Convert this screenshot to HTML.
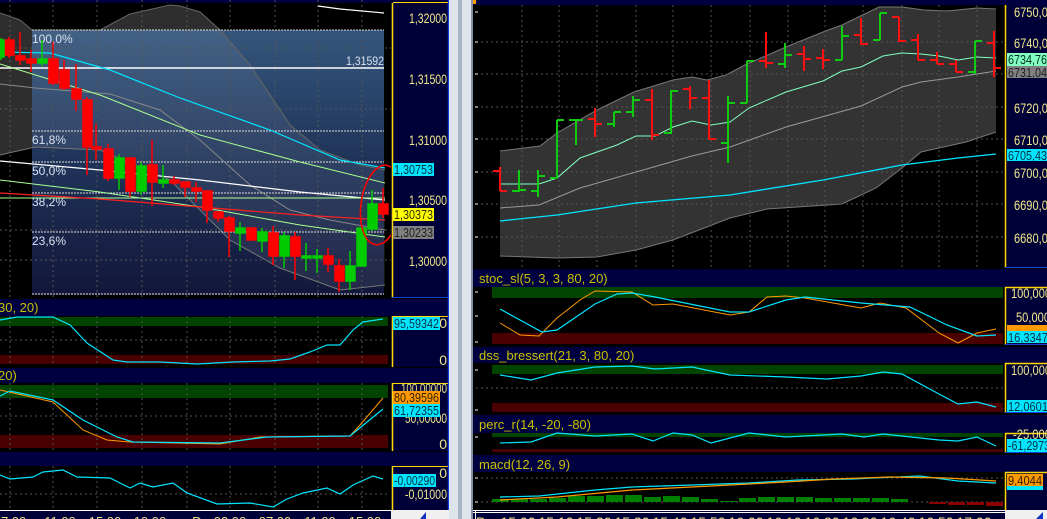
<!DOCTYPE html>
<html><head><meta charset="utf-8"><style>
html,body{margin:0;padding:0;background:#000;}
svg{display:block;font-family:"Liberation Sans",sans-serif;}
</style></head><body>
<svg width="1047" height="519" viewBox="0 0 1047 519" xmlns="http://www.w3.org/2000/svg">
<defs>
<linearGradient id="fib" x1="0" y1="0" x2="0" y2="1">
<stop offset="0" stop-color="#35567c"/><stop offset="0.5" stop-color="#1f3358"/><stop offset="1" stop-color="#12173a"/>
</linearGradient>
</defs>
<rect width="1047" height="519" fill="#000"/>
<rect x="0" y="0" width="449" height="3" fill="#000040"/>
<polygon points="0,13 20,20 32,30 32,147 0,155" fill="#2e2e2e"/>
<polygon points="100,30 130,14 170,5 180,6 200,12 220,30 32,30" fill="#2e2e2e"/>
<rect x="32" y="30" width="352" height="265" fill="url(#fib)"/>
<polygon points="32,30 220,30 250,65 290,125 320,150 360,165 385,170 385,285 340,290 280,268 230,240 170,180 100,150 32,147" fill="#fff" fill-opacity="0.07"/>
<polyline points="0,13 20,20 32,30 100,30 130,14 170,5 180,6 200,12 220,30 250,65 290,125 320,150 360,165 385,170" fill="none" stroke="#666" stroke-width="1"/>
<polyline points="0,155 35,147 100,150 170,180 230,240 280,268 340,290 385,285" fill="none" stroke="#777" stroke-width="1"/>
<g stroke="#555" stroke-dasharray="2,3" stroke-width="1">
<line x1="10" y1="0" x2="10" y2="297"/><line x1="53" y1="0" x2="53" y2="297"/><line x1="97" y1="0" x2="97" y2="297"/><line x1="142" y1="0" x2="142" y2="297"/><line x1="187" y1="0" x2="187" y2="297"/><line x1="230" y1="0" x2="230" y2="297"/><line x1="275" y1="0" x2="275" y2="297"/><line x1="318" y1="0" x2="318" y2="297"/><line x1="362" y1="0" x2="362" y2="297"/>
<line x1="0" y1="48" x2="391" y2="48"/><line x1="0" y1="109" x2="391" y2="109"/><line x1="0" y1="230" x2="391" y2="230"/><line x1="0" y1="260" x2="391" y2="260"/>
</g>
<g stroke="#ddd" stroke-dasharray="2,1" stroke-width="1">
<line x1="32" y1="30" x2="384" y2="30"/><line x1="32" y1="131" x2="384" y2="131"/><line x1="32" y1="162" x2="384" y2="162"/><line x1="32" y1="193" x2="384" y2="193"/><line x1="32" y1="232" x2="384" y2="232"/><line x1="32" y1="294" x2="384" y2="294"/>
</g>
<g fill="#d8e0f0" font-size="12">
<text x="32" y="43">100,0%</text><text x="32" y="144">61,8%</text><text x="32" y="175">50,0%</text><text x="32" y="206">38,2%</text><text x="32" y="245">23,6%</text>
<text x="346" y="65" textLength="38" lengthAdjust="spacingAndGlyphs">1,31592</text>
</g>
<polyline points="0,84 35,88 110,94 160,110 200,140 250,185 290,210 330,220 385,230" fill="none" stroke="#888" stroke-width="1"/>
<line x1="0" y1="68" x2="384" y2="68" stroke="#fff" stroke-width="1.5"/>
<polyline points="318,6 340,9 384,13" fill="none" stroke="#fff" stroke-width="1.2"/>
<polyline points="0,161 100,170 200,180 300,192 385,200" fill="none" stroke="#fff" stroke-width="1.2"/>
<polyline points="0,52 50,53 110,70 180,98 270,130 340,160 385,168" fill="none" stroke="#00e5ff" stroke-width="1.2"/>
<polyline points="0,64 100,95 200,135 300,162 385,183" fill="none" stroke="#a8ff90" stroke-width="1"/>
<polyline points="0,180 100,192 200,207 300,225 385,237" fill="none" stroke="#a8ff90" stroke-width="1"/>
<line x1="0" y1="198" x2="385" y2="198" stroke="#a8ff90" stroke-width="1"/>
<polyline points="0,193 100,199 200,207 300,215 385,220" fill="none" stroke="#ff2020" stroke-width="1.2"/>
<g stroke-width="1.5">
<g stroke="#ff0000" fill="#ff0000">
<line x1="9" y1="37" x2="9" y2="58"/><rect x="5" y="40" width="9" height="15"/>
<line x1="20" y1="32" x2="20" y2="65"/><rect x="16" y="56" width="9" height="4"/>
<line x1="31" y1="50" x2="31" y2="72"/><rect x="27" y="59" width="9" height="4"/>
<line x1="53" y1="42" x2="53" y2="85"/><rect x="49" y="59" width="9" height="24"/>
<line x1="64" y1="60" x2="64" y2="90"/><rect x="60" y="70" width="9" height="18"/>
<line x1="76" y1="64" x2="76" y2="111"/><rect x="72" y="89" width="9" height="10"/>
<line x1="87" y1="97" x2="87" y2="175"/><rect x="83" y="100" width="9" height="47"/>
<line x1="96" y1="124" x2="96" y2="160"/><rect x="92" y="147" width="9" height="2"/>
<line x1="108" y1="144" x2="108" y2="181"/><rect x="104" y="149" width="9" height="29"/>
<line x1="130" y1="158" x2="130" y2="197"/><rect x="126" y="158" width="9" height="33"/>
<line x1="152" y1="140" x2="152" y2="206"/><rect x="148" y="165" width="9" height="17"/>
<line x1="174" y1="176" x2="174" y2="185"/><rect x="170" y="180" width="9" height="3"/>
<line x1="185" y1="182" x2="185" y2="197"/><rect x="181" y="182" width="9" height="5"/>
<line x1="196" y1="182" x2="196" y2="202"/><rect x="192" y="188" width="9" height="3"/>
<line x1="207" y1="190" x2="207" y2="223"/><rect x="203" y="191" width="9" height="19"/>
<line x1="218" y1="212" x2="218" y2="222"/><rect x="214" y="212" width="9" height="6"/>
<line x1="229" y1="216" x2="229" y2="257"/><rect x="225" y="218" width="9" height="13"/>
<line x1="251" y1="228" x2="251" y2="240"/><rect x="247" y="228" width="9" height="12"/>
<line x1="273" y1="226" x2="273" y2="265"/><rect x="269" y="233" width="9" height="23"/>
<line x1="295" y1="232" x2="295" y2="280"/><rect x="291" y="237" width="9" height="19"/>
<line x1="328" y1="248" x2="328" y2="272"/><rect x="324" y="256" width="9" height="8"/>
<line x1="339" y1="259" x2="339" y2="292"/><rect x="335" y="266" width="9" height="15"/>
<line x1="383" y1="188" x2="383" y2="218"/><rect x="379" y="204" width="9" height="10"/>
</g>
<g stroke="#00cc00" fill="#00cc00">
<line x1="1" y1="38" x2="1" y2="60"/><rect x="-3" y="40" width="7" height="17"/>
<line x1="42" y1="40" x2="42" y2="66"/><rect x="38" y="59" width="9" height="4"/>
<line x1="119" y1="154" x2="119" y2="190"/><rect x="115" y="158" width="9" height="20"/>
<line x1="141" y1="162" x2="141" y2="195"/><rect x="137" y="166" width="9" height="25"/>
<line x1="163" y1="165" x2="163" y2="188"/><rect x="159" y="180" width="9" height="3"/>
<line x1="240" y1="222" x2="240" y2="251"/><rect x="236" y="228" width="9" height="5"/>
<line x1="262" y1="228" x2="262" y2="252"/><rect x="258" y="232" width="9" height="9"/>
<line x1="284" y1="232" x2="284" y2="268"/><rect x="280" y="236" width="9" height="20"/>
<line x1="306" y1="243" x2="306" y2="271"/><rect x="302" y="256" width="9" height="2"/>
<line x1="317" y1="249" x2="317" y2="273"/><rect x="313" y="256" width="9" height="2"/>
<line x1="350" y1="251" x2="350" y2="290"/><rect x="346" y="266" width="9" height="15"/>
<line x1="361" y1="228" x2="361" y2="266"/><rect x="357" y="228" width="9" height="38"/>
<line x1="372" y1="190" x2="372" y2="231"/><rect x="368" y="204" width="9" height="25"/>
</g>
</g>
<ellipse cx="381" cy="205" rx="20" ry="40" transform="rotate(8 381 205)" fill="none" stroke="#ff0000" stroke-width="1.5"/>
<rect x="391" y="0" width="58" height="298" fill="#000038"/>
<line x1="392.5" y1="3" x2="392.5" y2="298" stroke="#ffd700" stroke-width="1.5"/>
<line x1="393" y1="2.5" x2="449" y2="2.5" stroke="#ffd700"/>
<line x1="448.5" y1="0" x2="448.5" y2="298" stroke="#1040e0" stroke-width="1.5"/>
<line x1="392" y1="297.5" x2="449" y2="297.5" stroke="#1040e0"/>
<g fill="#f0e68c" font-size="14">
<text x="409" y="23" textLength="38" lengthAdjust="spacingAndGlyphs">1,32000</text><text x="409" y="84" textLength="38" lengthAdjust="spacingAndGlyphs">1,31500</text><text x="409" y="145" textLength="38" lengthAdjust="spacingAndGlyphs">1,31000</text><text x="409" y="205" textLength="38" lengthAdjust="spacingAndGlyphs">1,30500</text><text x="409" y="266" textLength="38" lengthAdjust="spacingAndGlyphs">1,30000</text>
</g>
<rect x="393" y="163" width="41" height="13" fill="#00e5ff"/><text x="394" y="174" font-size="13" fill="#003040" textLength="39" lengthAdjust="spacingAndGlyphs">1,30753</text>
<rect x="393" y="208" width="41" height="13" fill="#ffff00"/><text x="394" y="219" font-size="13" fill="#303000" textLength="39" lengthAdjust="spacingAndGlyphs">1,30373</text>
<rect x="393" y="226" width="41" height="13" fill="#808080"/><text x="394" y="237" font-size="13" fill="#202020" textLength="39" lengthAdjust="spacingAndGlyphs">1,30233</text>
<rect x="0" y="299" width="449" height="17" fill="#000040"/>
<rect x="0" y="368" width="449" height="15" fill="#000040"/>
<rect x="0" y="452" width="449" height="14" fill="#000040"/>
<text x="-2" y="312" font-size="13" fill="#c8c000">30, 20)</text>
<text x="-2" y="380" font-size="13" fill="#c8c000">20)</text>
<rect x="0" y="317" width="388" height="9" fill="#004400"/>
<rect x="0" y="355" width="388" height="9" fill="#4a0000"/>
<g stroke="#555" stroke-dasharray="2,3"><line x1="10" y1="316" x2="10" y2="366"/><line x1="53" y1="316" x2="53" y2="366"/><line x1="97" y1="316" x2="97" y2="366"/><line x1="142" y1="316" x2="142" y2="366"/><line x1="187" y1="316" x2="187" y2="366"/><line x1="230" y1="316" x2="230" y2="366"/><line x1="275" y1="316" x2="275" y2="366"/><line x1="318" y1="316" x2="318" y2="366"/><line x1="362" y1="316" x2="362" y2="366"/><line x1="0" y1="340" x2="388" y2="340"/></g>
<polyline points="0,320 17,317 53,317 70,325 87,343 113,360 127,362 160,362 197,364 233,362 270,361 290,359 310,352 327,345 340,345 353,330 363,322 383,319" fill="none" stroke="#00e5ff" stroke-width="1.2"/>
<rect x="0" y="385" width="388" height="13" fill="#004400"/>
<rect x="0" y="435" width="388" height="13" fill="#4a0000"/>
<g stroke="#555" stroke-dasharray="2,3"><line x1="10" y1="383" x2="10" y2="450"/><line x1="53" y1="383" x2="53" y2="450"/><line x1="97" y1="383" x2="97" y2="450"/><line x1="142" y1="383" x2="142" y2="450"/><line x1="187" y1="383" x2="187" y2="450"/><line x1="230" y1="383" x2="230" y2="450"/><line x1="275" y1="383" x2="275" y2="450"/><line x1="318" y1="383" x2="318" y2="450"/><line x1="362" y1="383" x2="362" y2="450"/><line x1="0" y1="416" x2="388" y2="416"/></g>
<polyline points="0,390 53,402 83,430 107,440 130,442 220,444 260,437 350,436 360,425 383,398" fill="none" stroke="#ff9900" stroke-width="1"/>
<polyline points="0,396 10,391 53,400 83,420 117,437 133,442 220,443 267,437 350,436 383,409" fill="none" stroke="#00e5ff" stroke-width="1.2"/>
<g stroke="#555" stroke-dasharray="2,3"><line x1="10" y1="466" x2="10" y2="510"/><line x1="53" y1="466" x2="53" y2="510"/><line x1="97" y1="466" x2="97" y2="510"/><line x1="142" y1="466" x2="142" y2="510"/><line x1="187" y1="466" x2="187" y2="510"/><line x1="230" y1="466" x2="230" y2="510"/><line x1="275" y1="466" x2="275" y2="510"/><line x1="318" y1="466" x2="318" y2="510"/><line x1="362" y1="466" x2="362" y2="510"/><line x1="0" y1="494" x2="388" y2="494"/></g>
<polyline points="0,475 10,479 33,477 43,472 63,470 77,477 110,478 130,488 140,483 153,487 173,483 187,493 217,504 250,503 273,507 287,499 303,493 327,488 340,494 353,485 373,476 383,479" fill="none" stroke="#00e5ff" stroke-width="1.2"/>
<g>
<rect x="391" y="316" width="58" height="51" fill="#000038"/>
<line x1="392.5" y1="316" x2="392.5" y2="367" stroke="#ffd700" stroke-width="1.5"/><line x1="392" y1="316.5" x2="449" y2="316.5" stroke="#ffd700"/>
<rect x="391" y="383" width="58" height="68" fill="#000038"/>
<line x1="392.5" y1="383" x2="392.5" y2="451" stroke="#ffd700" stroke-width="1.5"/><line x1="392" y1="383.5" x2="449" y2="383.5" stroke="#ffd700"/>
<rect x="391" y="466" width="58" height="44" fill="#000038"/>
<line x1="392.5" y1="466" x2="392.5" y2="510" stroke="#ffd700" stroke-width="1.5"/><line x1="392" y1="466.5" x2="449" y2="466.5" stroke="#ffd700"/>
<line x1="448.5" y1="298" x2="448.5" y2="510" stroke="#1040e0" stroke-width="1.5"/>
</g>
<g fill="#f0e68c" font-size="14" text-anchor="end">
<text x="447" y="328">0</text><text x="447" y="365">0</text>
<text x="447" y="393" textLength="46" lengthAdjust="spacingAndGlyphs">100,00000</text><text x="447" y="423" textLength="42" lengthAdjust="spacingAndGlyphs">50,00000</text><text x="447" y="449">0</text>
<text x="447" y="478">0</text><text x="447" y="499" textLength="42" lengthAdjust="spacingAndGlyphs">-0,01000</text>
</g>
<rect x="393" y="317" width="47" height="13" fill="#00e5ff"/><text x="394" y="328" font-size="13" fill="#003040" textLength="45" lengthAdjust="spacingAndGlyphs">95,59342</text>
<rect x="393" y="391" width="47" height="13" fill="#ff9900"/><text x="394" y="402" font-size="13" fill="#302000" textLength="45" lengthAdjust="spacingAndGlyphs">80,39596</text>
<rect x="393" y="404" width="47" height="13" fill="#00e5ff"/><text x="394" y="415" font-size="13" fill="#003040" textLength="45" lengthAdjust="spacingAndGlyphs">61,72355</text>
<rect x="393" y="474" width="43" height="13" fill="#00e5ff"/><text x="394" y="485" font-size="13" fill="#003040" textLength="41" lengthAdjust="spacingAndGlyphs">-0,00290</text>
<rect x="0" y="510" width="391" height="9" fill="#000038"/>
<line x1="0" y1="510.5" x2="391" y2="510.5" stroke="#fff"/>
<g fill="#f0e68c" font-size="13" text-anchor="middle">
<text x="10" y="526">07:00</text><text x="60" y="526">11:00</text><text x="105" y="526">15:00</text><text x="150" y="526">19:00</text><text x="197" y="526">D</text><text x="230" y="526">03:00</text><text x="275" y="526">07:00</text><text x="320" y="526">11:00</text><text x="365" y="526">15:00</text>
</g>
<rect x="391" y="510" width="58" height="9" fill="#f0f0f0"/>
<polygon points="420,519 426,512 426,519" fill="#1030c0"/>
<rect x="449" y="0" width="24" height="519" fill="#dde4ec"/>
<rect x="458" y="0" width="4" height="519" fill="#a8b4c4"/>
<rect x="471" y="0" width="2" height="519" fill="#8090a0"/>
<rect x="473" y="0" width="574" height="5" fill="#000040"/>
<rect x="473" y="0" width="3" height="4" fill="#ff9900"/>
<polygon points="500,151 540,146 557,133 597,110 634,92 673,80 692,77 707,80 726,75 745,65 786,47 823,32 842,25 879,7 902,7 924,10 947,11 977,8 996,9 996,132 966,142 921,152 902,168 876,188 842,204 767,209 730,218 673,240 636,250 597,257 557,258 500,256" fill="#333"/>
<polyline points="500,151 540,146 557,133 597,110 634,92 673,80 692,77 707,80 726,75 745,65 786,47 823,32 842,25 879,7 902,7 924,10 947,11 977,8 996,9" fill="none" stroke="#777"/>
<polyline points="500,256 557,258 597,257 636,250 673,240 730,218 767,209 842,204 876,188 902,168 921,152 966,142 996,132" fill="none" stroke="#777"/>
<g stroke="#555" stroke-dasharray="2,3">
<line x1="522" y1="5" x2="522" y2="268"/><line x1="559" y1="5" x2="559" y2="268"/><line x1="597" y1="5" x2="597" y2="268"/><line x1="636" y1="5" x2="636" y2="268"/><line x1="673" y1="5" x2="673" y2="268"/><line x1="711" y1="5" x2="711" y2="268"/><line x1="750" y1="5" x2="750" y2="268"/><line x1="788" y1="5" x2="788" y2="268"/><line x1="825" y1="5" x2="825" y2="268"/><line x1="863" y1="5" x2="863" y2="268"/><line x1="902" y1="5" x2="902" y2="268"/><line x1="939" y1="5" x2="939" y2="268"/><line x1="977" y1="5" x2="977" y2="268"/>
<line x1="476" y1="42" x2="1003" y2="42"/><line x1="476" y1="74" x2="1003" y2="74"/><line x1="476" y1="107" x2="1003" y2="107"/><line x1="476" y1="139" x2="1003" y2="139"/><line x1="476" y1="172" x2="1003" y2="172"/><line x1="476" y1="204" x2="1003" y2="204"/><line x1="476" y1="237" x2="1003" y2="237"/>
</g>
<polyline points="500,184 539,184 557,178 580,158 617,145 636,136 655,136 673,127 692,121 711,125 730,122 749,108 786,92 823,81 842,71 861,67 883,56 902,53 921,54 939,56 958,60 977,57 996,58" fill="none" stroke="#80ffc0" stroke-width="1"/>
<polyline points="500,208 539,205 580,188 636,172 692,156 730,147 786,127 861,106 902,87 921,82 958,77 996,71" fill="none" stroke="#999" stroke-width="1"/>
<polyline points="500,221 557,215 636,203 730,195 823,180 902,165 958,158 996,154" fill="none" stroke="#00e5ff" stroke-width="1.3"/>
<g stroke-width="2" fill="none">
<path stroke="#ff1010" d="M500 167V191M493 171H500M500 191H507"/>
<path stroke="#10cc10" d="M519 170V192M512 191H519M519 190H526"/>
<path stroke="#10cc10" d="M538 170V197M531 191H538M538 176H545"/>
<path stroke="#10cc10" d="M557 120V178M550 178H557M557 120H564"/>
<path stroke="#10cc10" d="M576 119V145M569 120H576M576 120H583"/>
<path stroke="#ff1010" d="M595 108V137M588 119H595M595 124H602"/>
<path stroke="#10cc10" d="M614 112V127M607 124H614M614 112H621"/>
<path stroke="#10cc10" d="M633 96V117M626 112H633M633 100H640"/>
<path stroke="#ff1010" d="M652 89V140M645 100H652M652 135H659"/>
<path stroke="#10cc10" d="M671 90V134M664 133H671M671 91H678"/>
<path stroke="#ff1010" d="M690 86V109M683 89H690M690 98H697"/>
<path stroke="#ff1010" d="M709 80V139M702 98H709M709 139H716"/>
<path stroke="#10cc10" d="M728 96V163M721 143H728M728 103H735"/>
<path stroke="#10cc10" d="M747 61V103M740 103H747M747 61H754"/>
<path stroke="#ff1010" d="M766 32V68M759 61H766M766 63H773"/>
<path stroke="#10cc10" d="M785 43V68M778 64H785M785 55H792"/>
<path stroke="#ff1010" d="M804 46V71M797 54H804M804 59H811"/>
<path stroke="#ff1010" d="M823 49V69M816 58H823M823 60H830"/>
<path stroke="#10cc10" d="M842 26V60M835 60H842M842 36H849"/>
<path stroke="#ff1010" d="M861 18V45M854 35H861M861 44H868"/>
<path stroke="#10cc10" d="M880 13V40M873 40H880M880 13H887"/>
<path stroke="#ff1010" d="M899 17V42M892 17H899M899 41H906"/>
<path stroke="#ff1010" d="M918 34V60M911 40H918M918 60H925"/>
<path stroke="#ff1010" d="M937 52V64M930 60H937M937 64H944"/>
<path stroke="#ff1010" d="M956 60V72M949 64H956M956 72H963"/>
<path stroke="#10cc10" d="M975 41V74M968 72H975M975 41H982"/>
<path stroke="#ff1010" d="M994 31V77M987 43H994M994 68H1001"/>
</g>
<rect x="1005" y="5" width="42" height="263" fill="#000038"/>
<line x1="1005.5" y1="5" x2="1005.5" y2="268" stroke="#ffd700" stroke-width="1.5"/>
<line x1="1005" y1="267.5" x2="1047" y2="267.5" stroke="#1040e0"/>
<g fill="#f0e68c" font-size="14">
<text x="1014" y="17" textLength="40" lengthAdjust="spacingAndGlyphs">6750,00</text><text x="1014" y="48" textLength="40" lengthAdjust="spacingAndGlyphs">6740,00</text><text x="1014" y="113" textLength="40" lengthAdjust="spacingAndGlyphs">6720,00</text><text x="1014" y="145" textLength="40" lengthAdjust="spacingAndGlyphs">6710,00</text><text x="1014" y="178" textLength="40" lengthAdjust="spacingAndGlyphs">6700,00</text><text x="1014" y="210" textLength="40" lengthAdjust="spacingAndGlyphs">6690,00</text><text x="1014" y="243" textLength="40" lengthAdjust="spacingAndGlyphs">6680,00</text>
</g>
<rect x="1007" y="53" width="40" height="13" fill="#80ffc0"/><text x="1008" y="64" font-size="13" fill="#003020" textLength="39" lengthAdjust="spacingAndGlyphs">6734,76</text>
<rect x="1007" y="66" width="40" height="12" fill="#808080"/><text x="1008" y="77" font-size="13" fill="#202020" textLength="39" lengthAdjust="spacingAndGlyphs">6731,04</text>
<rect x="1007" y="149" width="40" height="12" fill="#00e5ff"/><text x="1008" y="160" font-size="13" fill="#003040" textLength="39" lengthAdjust="spacingAndGlyphs">6705,43</text>
<rect x="473" y="269" width="574" height="18" fill="#000040"/>
<rect x="473" y="347" width="574" height="16" fill="#000040"/>
<rect x="473" y="415" width="574" height="18" fill="#000040"/>
<rect x="473" y="455" width="574" height="17" fill="#000040"/>
<g fill="#c8c000" font-size="13">
<text x="479" y="283">stoc_sl(5, 3, 3, 80, 20)</text>
<text x="479" y="360">dss_bressert(21, 3, 80, 20)</text>
<text x="479" y="429">perc_r(14, -20, -80)</text>
<text x="479" y="469">macd(12, 26, 9)</text>
</g>
<rect x="492" y="287" width="511" height="11" fill="#004400"/>
<rect x="492" y="333" width="511" height="11" fill="#4a0000"/>
<polyline points="500,323 520,335 539,336 557,318 580,300 595,291 632,292 653,305 673,304 730,315 749,312 767,297 786,296 805,298 861,308 880,303 906,308 939,333 958,343 977,333 996,329" fill="none" stroke="#ff9900" stroke-width="1"/>
<polyline points="500,309 542,332 557,330 595,304 617,294 632,293 655,297 730,312 749,312 786,300 805,297 861,303 910,307 947,325 977,336 996,335" fill="none" stroke="#00e5ff" stroke-width="1.2"/>
<rect x="492" y="365" width="511" height="9" fill="#004400"/>
<rect x="492" y="403" width="511" height="9" fill="#4a0000"/>
<line x1="476" y1="388" x2="1003" y2="388" stroke="#555" stroke-dasharray="2,3"/>
<polyline points="500,375 531,380 557,373 595,367 632,366 655,369 692,367 730,375 786,377 827,379 861,376 883,372 902,374 939,394 958,404 977,402 996,407" fill="none" stroke="#00e5ff" stroke-width="1.2"/>
<rect x="492" y="433" width="511" height="4" fill="#004400"/>
<rect x="492" y="449" width="511" height="3" fill="#4a0000"/>
<polyline points="500,443 531,442 557,433 595,436 632,434 653,441 673,433 692,435 711,443 749,433 786,437 842,434 864,437 883,434 939,440 958,441 977,437 996,446" fill="none" stroke="#00e5ff" stroke-width="1.2"/>
<g stroke="#555" stroke-dasharray="2,3"><line x1="476" y1="478" x2="1003" y2="478"/><line x1="476" y1="502" x2="1003" y2="502"/></g>
<g fill="#008000">
<rect x="492" y="499" width="17" height="3"/><rect x="511" y="499" width="17" height="3"/><rect x="530" y="499" width="17" height="3"/><rect x="549" y="498" width="17" height="4"/><rect x="568" y="496" width="17" height="6"/><rect x="587" y="496" width="17" height="6"/><rect x="606" y="495" width="17" height="7"/><rect x="625" y="495" width="17" height="7"/><rect x="644" y="497" width="17" height="5"/><rect x="663" y="496" width="17" height="6"/><rect x="682" y="497" width="17" height="5"/><rect x="701" y="499" width="17" height="3"/><rect x="720" y="501" width="17" height="1"/><rect x="739" y="498" width="17" height="4"/><rect x="758" y="497" width="17" height="5"/><rect x="777" y="497" width="17" height="5"/><rect x="796" y="497" width="17" height="5"/><rect x="815" y="498" width="17" height="4"/><rect x="834" y="498" width="17" height="4"/><rect x="853" y="498" width="17" height="4"/><rect x="872" y="498" width="17" height="4"/><rect x="891" y="499" width="17" height="3"/>
</g>
<g fill="#8b0000"><rect x="929" y="502" width="17" height="2"/><rect x="948" y="502" width="17" height="3"/><rect x="967" y="502" width="17" height="3"/><rect x="986" y="502" width="17" height="4"/></g>
<polyline points="500,497 539,496 595,490 632,487 692,485 749,483 798,480 853,479 872,478 920,476 958,481 996,483" fill="none" stroke="#00e5ff" stroke-width="1.2"/>
<polyline points="500,500 557,497 632,490 711,486 786,482 834,479 890,477 947,478 996,481" fill="none" stroke="#ff9900" stroke-width="1.2"/>
<rect x="1005" y="287" width="42" height="58" fill="#000038"/>
<rect x="1005" y="363" width="42" height="50" fill="#000038"/>
<rect x="1005" y="433" width="42" height="20" fill="#000038"/>
<rect x="1005" y="472" width="42" height="38" fill="#000038"/>
<g stroke="#ffd700" stroke-width="1.5">
<line x1="1005.5" y1="287" x2="1005.5" y2="345"/><line x1="1005" y1="287.5" x2="1047" y2="287.5"/>
<line x1="1005.5" y1="363" x2="1005.5" y2="413"/><line x1="1005" y1="363.5" x2="1047" y2="363.5"/>
<line x1="1005.5" y1="433" x2="1005.5" y2="453"/><line x1="1005" y1="433.5" x2="1047" y2="433.5"/>
<line x1="1005.5" y1="472" x2="1005.5" y2="510"/><line x1="1005" y1="472.5" x2="1047" y2="472.5"/>
</g>
<g stroke="#1040e0"><line x1="1005" y1="344.5" x2="1047" y2="344.5"/><line x1="1005" y1="412.5" x2="1047" y2="412.5"/><line x1="1005" y1="452.5" x2="1047" y2="452.5"/></g>
<g fill="#f0e68c" font-size="14">
<text x="1011" y="298" textLength="40" lengthAdjust="spacingAndGlyphs">100,000</text><text x="1016" y="322" textLength="34" lengthAdjust="spacingAndGlyphs">50,000</text><text x="1011" y="375" textLength="40" lengthAdjust="spacingAndGlyphs">100,000</text><text x="1013" y="439" textLength="38" lengthAdjust="spacingAndGlyphs">-25,000</text>
</g>
<rect x="1007" y="325" width="40" height="6" fill="#ff9900"/>
<rect x="1007" y="331" width="40" height="12" fill="#00e5ff"/><text x="1008" y="342" font-size="13" fill="#003040" textLength="40" lengthAdjust="spacingAndGlyphs">16,3347</text>
<rect x="1007" y="400" width="40" height="12" fill="#00e5ff"/><text x="1008" y="411" font-size="13" fill="#003040" textLength="40" lengthAdjust="spacingAndGlyphs">12,0601</text>
<rect x="1007" y="439" width="40" height="13" fill="#00e5ff"/><text x="1008" y="450" font-size="13" fill="#003040" textLength="42" lengthAdjust="spacingAndGlyphs">-61,2973</text>
<rect x="1007" y="474" width="36" height="12" fill="#ff9900"/><text x="1008" y="485" font-size="13" fill="#302000" textLength="34" lengthAdjust="spacingAndGlyphs">9,4044</text>
<rect x="1007" y="486" width="36" height="4" fill="#00e5ff"/>
<g stroke="#fff"><line x1="475" y1="12" x2="478" y2="12"/><line x1="475" y1="42" x2="478" y2="42"/><line x1="475" y1="74" x2="478" y2="74"/><line x1="475" y1="107" x2="478" y2="107"/><line x1="475" y1="139" x2="478" y2="139"/><line x1="475" y1="172" x2="478" y2="172"/><line x1="475" y1="204" x2="478" y2="204"/><line x1="475" y1="237" x2="478" y2="237"/><line x1="475" y1="292" x2="478" y2="292"/><line x1="475" y1="316" x2="478" y2="316"/><line x1="475" y1="342" x2="478" y2="342"/><line x1="475" y1="370" x2="478" y2="370"/><line x1="475" y1="410" x2="478" y2="410"/><line x1="475" y1="437" x2="478" y2="437"/><line x1="475" y1="478" x2="478" y2="478"/><line x1="475" y1="502" x2="478" y2="502"/></g>
<rect x="473" y="510" width="532" height="9" fill="#000038"/>
<line x1="473" y1="510.5" x2="1005" y2="510.5" stroke="#fff"/>
<line x1="473" y1="512.5" x2="1005" y2="512.5" stroke="#fff"/>
<line x1="475.5" y1="510" x2="475.5" y2="519" stroke="#fff"/>
<g fill="#f0e68c" font-size="14" text-anchor="middle">
<text x="481" y="527">D</text><text x="518" y="527">15:00</text><text x="556" y="527">15:10</text><text x="594" y="527">15:20</text><text x="632" y="527">15:30</text><text x="670" y="527">15:40</text><text x="708" y="527">15:50</text><text x="746" y="527">16:00</text><text x="784" y="527">16:10</text><text x="822" y="527">16:20</text><text x="860" y="527">16:30</text><text x="898" y="527">16:40</text><text x="936" y="527">16:50</text><text x="974" y="527">17:00</text>
</g>
<rect x="1005" y="510" width="42" height="9" fill="#f0f0f0"/>
<polygon points="1036,519 1043,512 1043,519" fill="#1030c0"/>
</svg>
</body></html>
